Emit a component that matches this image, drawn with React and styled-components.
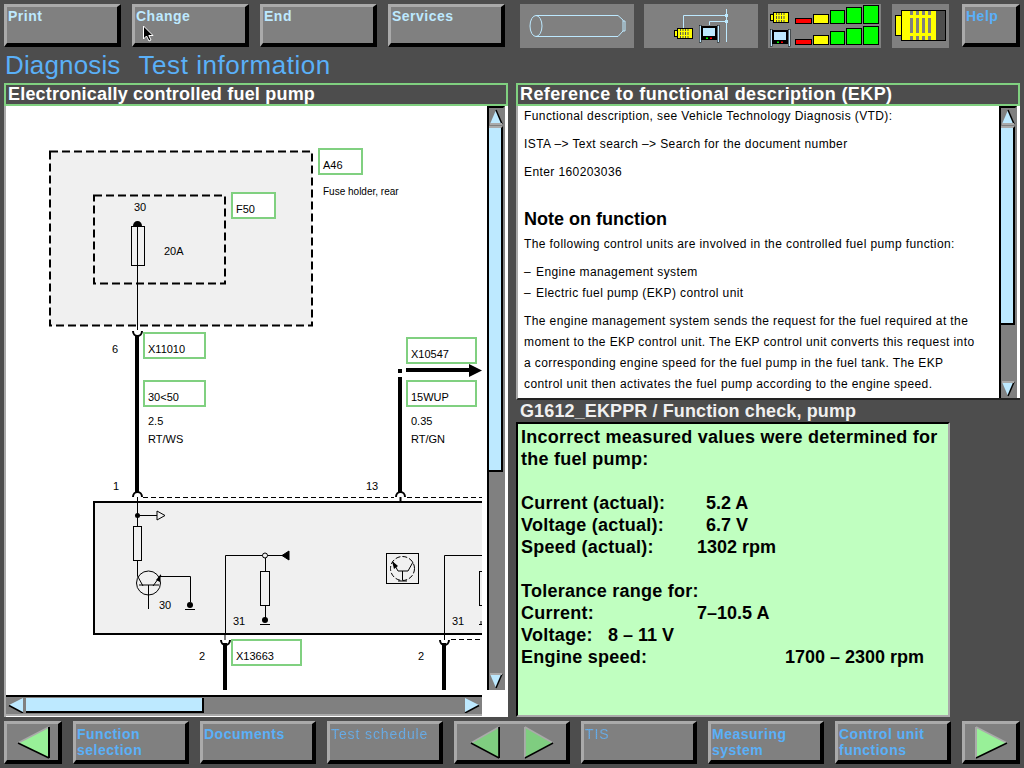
import React from "react";
import styled, { createGlobalStyle, css } from "styled-components";

const GlobalStyle = createGlobalStyle`
  html, body {
    margin: 0;
    padding: 0;
    background: #4d4d4d;
    font-family: "Liberation Sans", Arial, sans-serif;
  }
`;

const Page = styled.div`
  width: 1024px;
  height: 768px;
  box-sizing: border-box;
  padding: 4px 4px 0;
  position: relative;
  overflow: hidden;
  display: flex;
  flex-direction: column;
`;

const Toolbar = styled.div`
  display: flex;
  height: 44px;
  gap: 11px;
`;

const disabledText = css`
  font-weight: 400;
  letter-spacing: 0.9px;
  background: repeating-conic-gradient(#5ab0f8 0 25%, #74a4d0 0 50%) 0 0 / 2px 2px;
  -webkit-background-clip: text;
  background-clip: text;
  color: transparent;
`;

const Button = styled.div`
  box-sizing: border-box;
  width: ${(p) => p.$w || 117}px;
  height: 43px;
  flex: none;
  margin-left: ${(p) => p.$ml || 0}px;
  background: #808080;
  border-style: solid;
  border-width: 3px 4px 4px 3px;
  border-color: #aaaaaa #000 #000 #aaaaaa;
  padding: ${(p) => (p.$low ? 2 : 1)}px 0 0 1px;
  font-size: 14px;
  font-weight: 700;
  line-height: 16px;
  letter-spacing: 0.5px;
  color: ${(p) => (p.$dark ? "#5ab0f8" : "#bde9ff")};
  display: ${(p) => (p.$center ? "flex" : "block")};
  align-items: center;
  justify-content: center;
  gap: 24px;
`;

const Caption = styled.span`
  display: block;
  ${(p) => p.$disabled && disabledText}
  width: fit-content;
`;

const IconTile = styled.div`
  box-sizing: border-box;
  flex: none;
  width: ${(p) => p.$w}px;
  height: 44px;
  margin-left: ${(p) => p.$ml || 0}px;
  background: #808080;
  svg {
    display: block;
  }
`;

const Title = styled.div`
  height: 35px;
  display: flex;
  align-items: center;
  gap: 18px;
  padding-left: 1px;
  font-size: 26px;
  color: #5ab0f8;
`;

const TitlePart = styled.span`
  letter-spacing: ${(p) => p.$ls}px;
`;

const Columns = styled.div`
  display: grid;
  grid-template-columns: 504px 504px;
  column-gap: 8px;
`;

const Column = styled.div`
  display: flex;
  flex-direction: column;
  height: 634px;
`;

const PanelHeader = styled.div`
  box-sizing: border-box;
  height: 23px;
  border: 2px solid #80d080;
  padding-left: 2px;
  font-size: 18px;
  font-weight: 700;
  line-height: 18px;
  letter-spacing: ${(p) => p.$ls}px;
  color: #fff;
  white-space: nowrap;
`;

const DiagramPane = styled.div`
  box-sizing: border-box;
  height: 611px;
  background: #fff;
  border-left: 2px solid #aaa;
  display: grid;
  grid-template-columns: 476px 18px;
  grid-template-rows: 584px 21px;
  column-gap: 5px;
  row-gap: 5px;
`;

const Diagram = styled.svg`
  display: block;
  width: 476px;
  height: 584px;
`;

const VScroll = styled.div`
  box-sizing: border-box;
  width: 18px;
  height: ${(p) => p.$h}px;
  background: #808080;
  border-left: 2px solid #000;
  border-top: 2px solid #000;
  border-right: 2px solid #808080;
  display: flex;
  flex-direction: column;
`;

const ThumbV = styled.div`
  box-sizing: border-box;
  width: 14px;
  height: ${(p) => p.$size}px;
  flex: none;
  background: #bde9ff;
  border-right: 2px solid #000;
  border-bottom: 2px solid #000;
  border-top: 2px solid #aaa;
`;

const Spacer = styled.div`
  flex: 1;
`;

const HScroll = styled.div`
  box-sizing: border-box;
  grid-column: 1;
  width: 476px;
  height: 21px;
  background: #808080;
  border-top: 2px solid #000;
  border-bottom: 2px solid #aaa;
  padding: 1px 2px;
  display: flex;
  align-items: stretch;
  gap: 2px;
`;

const ThumbH = styled.div`
  box-sizing: border-box;
  width: ${(p) => p.$size}px;
  flex: none;
  background: #bde9ff;
  border-right: 2px solid #000;
  border-bottom: 2px solid #000;
`;

const TextPane = styled.div`
  box-sizing: border-box;
  height: 294px;
  background: #fff;
  border-left: 2px solid #aaa;
  border-bottom: 2px solid #222;
  display: flex;
  justify-content: space-between;
  padding-right: 3px;
`;

const TextBody = styled.div`
  padding: 3px 0 0 6px;
  font-size: 12px;
  line-height: 14px;
  letter-spacing: 0.4px;
  color: #000;
  white-space: nowrap;
`;

const Para = styled.p`
  margin: ${(p) => p.$mt || 0}px 0 ${(p) => p.$mb ?? 14}px;
  line-height: ${(p) => p.$lh || 14}px;
`;

const Dash = styled.span`
  display: inline-block;
  width: 12px;
`;

const NoteHeading = styled.h3`
  margin: 30px 0 8px;
  font-size: 18px;
  line-height: 20px;
  font-weight: 700;
  letter-spacing: 0;
`;

const ResultHeading = styled.div`
  height: 22px;
  padding-left: 4px;
  font-size: 18px;
  font-weight: 700;
  line-height: 23px;
  color: #f0f0f0;
  letter-spacing: 0.12px;
  white-space: nowrap;
`;

const ResultBox = styled.div`
  box-sizing: border-box;
  width: 434px;
  height: 296px;
  background: #c0ffc0;
  border-style: solid;
  border-width: 2px;
  border-color: #000 #aaa #aaa #000;
  padding: 2px 0 0 3px;
  font-size: 18px;
  font-weight: 700;
  line-height: 22px;
  letter-spacing: 0.25px;
  color: #000;
`;

const ResultLine = styled.div`
  display: flex;
  height: 22px;
  margin-top: ${(p) => p.$gap || 0}px;
  white-space: nowrap;
`;

const ResultLabel = styled.span`
  flex: none;
  width: ${(p) => p.$w}px;
`;

const ResultValue = styled.span`
  letter-spacing: 0;
`;

const BottomBar = styled.div`
  display: flex;
  gap: 11px;
  margin-top: 4px;
`;

const CursorMark = styled.svg`
  position: absolute;
  left: 142px;
  top: 25px;
`;

const Wire = styled.path`
  fill: none;
  stroke: #000;
  stroke-width: ${(p) => p.$w || 1}px;
  ${(p) => p.$dash && `stroke-dasharray: ${p.$dash};`}
`;

const Area = styled.rect`
  fill: #f0f0f0;
  stroke: #000;
  stroke-width: 2px;
  ${(p) => p.$dash && `stroke-dasharray: ${p.$dash};`}
`;

const Part = styled.rect`
  fill: ${(p) => p.$fill || "none"};
  stroke: #000;
  stroke-width: 1px;
`;

const LabelBox = styled.rect`
  fill: #fff;
  stroke: #80d080;
  stroke-width: 2px;
`;

const DiagramText = styled.text`
  font-family: "Liberation Sans", Arial, sans-serif;
  font-size: ${(p) => p.$size || 11}px;
  fill: #000;
`;

const Tag = ({ x, y, w, label }) => (
  <>
    <LabelBox x={x} y={y} width={w} height={25} />
    <DiagramText x={x + 4} y={y + 20}>
      {label}
    </DiagramText>
  </>
);

const Ground = ({ x, y }) => (
  <>
    <circle cx={x} cy={y - 4} r={3} fill="#000" />
    <Wire d={`M${x - 5} ${y}.5H${x + 5}`} />
  </>
);

const ArrowUp = ({ flip }) => (
  <svg width="14" height="18" viewBox="0 0 14 18" style={{ flex: "none", transform: flip ? "rotate(180deg)" : "none" }}>
    <path d="M7 2 L13 16 H1 Z" fill="#bde9ff" />
    <path d={flip ? "M7 2 L1 16" : "M7 2 L13 16"} stroke="#000" strokeWidth="1.5" fill="none" />
    <path d="M1 16 H13" stroke="#aaa" strokeWidth="2" />
  </svg>
);

const ArrowSide = ({ right }) => (
  <svg width="16" height="15" viewBox="0 0 16 15" style={{ flex: "none" }}>
    {right ? (
      <>
        <path d="M1 0 L15 7 L1 15 Z" fill="#bde9ff" />
        <path d="M15 7.5 L1 15" stroke="#000" strokeWidth="1.5" />
      </>
    ) : (
      <>
        <path d="M15 0 L1 7 L15 15 Z" fill="#bde9ff" />
        <path d="M1 7.5 L15 15" stroke="#000" strokeWidth="1.5" />
      </>
    )}
  </svg>
);

const NavArrow = ({ right, dim }) => {
  const fill = dim ? "#7fcd80" : "#98f098";
  const w = dim ? 30 : 33;
  return (
    <svg width={w} height="33" viewBox="0 0 33 33" preserveAspectRatio="none" style={{ flex: "none" }}>
      {right ? (
        <>
          <path d="M1 1 L32 17 L1 32 Z" fill={fill} />
          <path d="M1 1 L32 17" stroke="#aaa" strokeWidth="1.5" fill="none" />
          <path d="M1 1 V32" stroke="#aaa" strokeWidth="2" fill="none" />
          <path d="M32 17 L1 32" stroke="#000" strokeWidth="1.5" fill="none" />
        </>
      ) : (
        <>
          <path d="M32 1 L1 17 L32 32 Z" fill={fill} />
          <path d="M32 1 L1 17" stroke="#aaa" strokeWidth="1.5" fill="none" />
          <path d="M1 17 L32 32" stroke="#000" strokeWidth="1.5" fill="none" />
          <path d="M32 1 V32" stroke="#000" strokeWidth="2" fill="none" />
        </>
      )}
    </svg>
  );
};

const MiniConnector = ({ x, y }) => (
  <g>
    <rect x={x + 0.5} y={y + 2.5} width="3" height="6" fill="#ff0" stroke="#000" />
    <rect x={x + 3.5} y={y + 0.5} width="15" height="10" fill="#ff0" stroke="#000" />
    {[0, 1, 2, 3].map((i) => (
      <rect key={i} x={x + 6 + i * 2.5} y={y + 1} width="1" height="9" fill="#555" />
    ))}
    <rect x={x + 5} y={y + 3} width="10" height="1" fill="#ff0" />
    <rect x={x + 5} y={y + 7} width="10" height="1" fill="#ff0" />
  </g>
);

const MiniMonitor = ({ x, y }) => (
  <g>
    <rect x={x + 0.25} y={y + 0.25} width="2" height="17" fill="#bde9ff" stroke="#000" strokeWidth="0.5" />
    <rect x={x + 18.25} y={y + 0.25} width="2" height="17" fill="#bde9ff" stroke="#000" strokeWidth="0.5" />
    <rect x={x + 2} y={y + 1} width="16" height="14" fill="#000" />
    <rect x={x + 4} y={y + 3} width="12" height="8" fill="#bde9ff" />
    <rect x={x + 7} y={y + 12.5} width="2" height="1.5" fill="#0f0" />
    <rect x={x + 11} y={y + 12.5} width="2" height="1.5" fill="#f00" />
  </g>
);

const CylinderIcon = () => (
  <svg width="114" height="44" viewBox="520 4 114 44" fill="none" stroke="#bde9ff" strokeWidth="1">
    <ellipse cx="536" cy="26" rx="6" ry="10.5" />
    <path d="M536 15.5H618L623 20V31L618 36.5H536" />
    <path d="M623 21H625V31H623" />
  </svg>
);

const WiringIcon = () => (
  <svg width="114" height="44" viewBox="644 4 114 44" fill="none">
    <path d="M726.5 9V42M726 15.5H683.5V28M726 21.5H709.5V25" stroke="#bde9ff" />
    <rect x="725" y="14" width="3" height="3" fill="#bde9ff" />
    <rect x="725" y="20" width="3" height="3" fill="#bde9ff" />
    <MiniConnector x={674} y={28} />
    <MiniMonitor x={699} y={25} />
  </svg>
);

const bars = [
  [795, 17, 5, "#f00"],
  [813, 16, 9, "#ff0"],
  [830, 15, 13, "#0f0"],
  [846, 16, 16, "#0f0"],
  [863, 16, 18, "#0f0"],
];

const SignalIcon = () => (
  <svg width="113" height="44" viewBox="768 4 113 44">
    <MiniConnector x={770} y={12} />
    <MiniMonitor x={770} y={29} />
    {[23.5, 44.5].map((bottom) =>
      bars.map(([x, w, h, fill]) => (
        <rect key={`${bottom}-${x}`} x={x + 0.5} y={bottom - h} width={w - 1} height={h} fill={fill} stroke="#000" />
      ))
    )}
  </svg>
);

const ConnectorIcon = () => (
  <svg width="57" height="44" viewBox="892 4 57 44">
    <rect x="895.5" y="15.5" width="6" height="20" fill="#ff0" stroke="#000" />
    <rect x="901.5" y="10.5" width="44" height="30" fill="#4d4d4d" stroke="#000" />
    <rect x="902" y="11" width="34" height="29" fill="#ff0" />
    {[910, 916, 922, 928].map((x) => (
      <React.Fragment key={x}>
        <rect x={x} y="11" width="3" height="4" fill="#808080" />
        <rect x={x} y="18" width="3" height="15" fill="#808080" />
        <rect x={x} y="36" width="3" height="4" fill="#808080" />
      </React.Fragment>
    ))}
  </svg>
);

const Schematic = () => (
  <Diagram viewBox="6 106 476 584">
    <Area x="50" y="151.5" width="262" height="174" $dash="8 4" />
    <Area x="94" y="195.5" width="131" height="88" $dash="8 4" />
    <Tag x={319} y={149} w={43} label="A46" />
    <DiagramText x={323} y={195} $size={10}>Fuse holder, rear</DiagramText>
    <Tag x={232} y={193} w={43} label="F50" />
    <DiagramText x={134} y={211}>30</DiagramText>
    <DiagramText x={164} y={255}>20A</DiagramText>
    <path d="M133 226a4.5 5 0 0 1 9 0z" fill="#000" />
    <Part x="131.5" y="226.5" width="13" height="39" $fill="#f0f0f0" />
    <Wire d="M137.5 226V330" />
    <Wire d="M133 331a4.5 5 0 0 0 9 0" $w={2} />

    <Wire d="M137 336V492" $w={4} />
    <Tag x={144} y={333} w={61} label="X11010" />
    <Tag x={144} y={381} w={61} label="30<50" />
    <DiagramText x={112} y={353}>6</DiagramText>
    <DiagramText x={148} y={425}>2.5</DiagramText>
    <DiagramText x={148} y={443}>RT/WS</DiagramText>

    <Tag x={407} y={338} w={69} label="X10547" />
    <Tag x={407} y={381} w={69} label="15WUP" />
    <Wire d="M406 370H470" $w={4} />
    <path d="M469 364L482 370.5L469 377Z" fill="#000" />
    <rect x="398" y="369" width="4" height="4" fill="#000" />
    <Wire d="M400 377V492" $w={4} />
    <DiagramText x={411} y={425}>0.35</DiagramText>
    <DiagramText x={411} y={443}>RT/GN</DiagramText>
    <DiagramText x={113} y={490}>1</DiagramText>
    <DiagramText x={366} y={490}>13</DiagramText>

    <Wire d="M133 497a4.5 5 0 0 1 9 0" $w={2} />
    <Wire d="M396 497a4.5 5 0 0 1 9 0" $w={2} />
    <Wire d="M143 497.5H394M407 497.5H482" $dash="5 3" />
    <Area x="94" y="502" width="400" height="132" />
    <Wire d="M137.5 497V526M137.5 560V576L143 586" />
    <Wire d="M400.5 497V502" $w={2} />
    <circle cx="137.5" cy="515.5" r="2.5" fill="#000" />
    <Wire d="M137 515.5H157M157 511L165 515.5L157 520Z" />
    <Part x="133.5" y="526.5" width="8" height="34" $fill="#f0f0f0" />
    <circle cx="148.5" cy="583" r="12" fill="none" stroke="#000" />
    <Wire d="M139 585H159M148.5 585V609M153 586L161 575M160 576.5H190.5V602" />
    <path d="M156 580L161 574L160 582Z" fill="#000" />
    <DiagramText x={159} y={609}>30</DiagramText>
    <Ground x={190} y={609} />

    <Wire d="M225.5 634V555.5H284" />
    <circle cx="265" cy="555.5" r="2.5" fill="#f0f0f0" stroke="#000" />
    <path d="M282 555.5L289 551V560Z" fill="#000" stroke="#000" />
    <Wire d="M265.5 558V571M265.5 605V620" />
    <Part x="260.5" y="571.5" width="9" height="34" $fill="#f0f0f0" />
    <Ground x={265} y={624} />
    <DiagramText x={233} y={625}>31</DiagramText>

    <Part x="386.5" y="553.5" width="32" height="30" $fill="#f0f0f0" />
    <circle cx="402.5" cy="568.5" r="12" fill="none" stroke="#000" strokeDasharray="5 2" />
    <Wire d="M393 562L398 571H408L413 562M402.5 571V580M398 581H407" />
    <path d="M392 561L398 566L394 569Z" fill="#000" />

    <Wire d="M444.5 634V555.5H482" />
    <Part x="479.5" y="571.5" width="9" height="34" />
    <DiagramText x={452} y={625}>31</DiagramText>
    <Wire d="M479 624.5H482M481 621V624" />

    <Wire d="M221 640a4.5 5 0 0 0 9 0" $w={2} />
    <Wire d="M225 634V640M444.5 634V640" />
    <Wire d="M440 640a4.5 5 0 0 0 9 0" $w={2} />
    <Wire d="M225 643V691M444 643V691" $w={4} />
    <Wire d="M451 639.5H482" $dash="5 3" />
    <Tag x={232} y={640} w={69} label="X13663" />
    <DiagramText x={199} y={660}>2</DiagramText>
    <DiagramText x={418} y={660}>2</DiagramText>
  </Diagram>
);

export default function App() {
  return (
    <Page>
      <GlobalStyle />
      <Toolbar>
        <Button>Print</Button>
        <Button>Change</Button>
        <Button>End</Button>
        <Button>Services</Button>
        <IconTile $w={114} $ml={4}>
          <CylinderIcon />
        </IconTile>
        <IconTile $w={114} $ml={-1}>
          <WiringIcon />
        </IconTile>
        <IconTile $w={113} $ml={-1}>
          <SignalIcon />
        </IconTile>
        <IconTile $w={57}>
          <ConnectorIcon />
        </IconTile>
        <Button $w={58} $dark $ml={2}>
          Help
        </Button>
      </Toolbar>

      <Title>
        <TitlePart $ls={0.15}>Diagnosis</TitlePart>
        <TitlePart $ls={0.55}>Test information</TitlePart>
      </Title>

      <Columns>
        <Column>
          <PanelHeader $ls={0.2}>Electronically controlled fuel pump</PanelHeader>
          <DiagramPane>
            <Schematic />
            <VScroll $h={584}>
              <ArrowUp />
              <ThumbV $size={346} />
              <Spacer />
              <ArrowUp flip />
            </VScroll>
            <HScroll>
              <ArrowSide />
              <ThumbH $size={178} />
              <Spacer />
              <ArrowSide right />
            </HScroll>
          </DiagramPane>
        </Column>

        <Column>
          <PanelHeader $ls={0.4}>Reference to functional description (EKP)</PanelHeader>
          <TextPane>
            <TextBody>
              <Para>Functional description, see Vehicle Technology Diagnosis (VTD):</Para>
              <Para>ISTA –&gt; Text search –&gt; Search for the document number</Para>
              <Para>Enter 160203036</Para>
              <NoteHeading>Note on function</NoteHeading>
              <Para>The following control units are involved in the controlled fuel pump function:</Para>
              <Para $mb={7}>
                <Dash>–</Dash>Engine management system
              </Para>
              <Para>
                <Dash>–</Dash>Electric fuel pump (EKP) control unit
              </Para>
              <Para $lh={21} $mb={0} $mt={-3}>
                The engine management system sends the request for the fuel required at the
                <br />
                moment to the EKP control unit. The EKP control unit converts this request into
                <br />
                a corresponding engine speed for the fuel pump in the fuel tank. The EKP
                <br />
                control unit then activates the fuel pump according to the engine speed.
              </Para>
            </TextBody>
            <VScroll $h={292}>
              <ArrowUp />
              <ThumbV $size={199} />
              <Spacer />
              <ArrowUp flip />
            </VScroll>
          </TextPane>
          <ResultHeading>G1612_EKPPR / Function check, pump</ResultHeading>
          <ResultBox>
            <ResultLine>Incorrect measured values were determined for</ResultLine>
            <ResultLine>the fuel pump:</ResultLine>
            <ResultLine $gap={22}>
              <ResultLabel $w={185}>Current (actual):</ResultLabel>
              <ResultValue>5.2 A</ResultValue>
            </ResultLine>
            <ResultLine>
              <ResultLabel $w={185}>Voltage (actual):</ResultLabel>
              <ResultValue>6.7 V</ResultValue>
            </ResultLine>
            <ResultLine>
              <ResultLabel $w={176}>Speed (actual):</ResultLabel>
              <ResultValue>1302 rpm</ResultValue>
            </ResultLine>
            <ResultLine $gap={22}>Tolerance range for:</ResultLine>
            <ResultLine>
              <ResultLabel $w={176}>Current:</ResultLabel>
              <ResultValue>7–10.5 A</ResultValue>
            </ResultLine>
            <ResultLine>
              <ResultLabel $w={87}>Voltage:</ResultLabel>
              <ResultValue>8 – 11 V</ResultValue>
            </ResultLine>
            <ResultLine>
              <ResultLabel $w={264}>Engine speed:</ResultLabel>
              <ResultValue>1700 – 2300 rpm</ResultValue>
            </ResultLine>
          </ResultBox>
        </Column>
      </Columns>

      <BottomBar>
        <Button $w={58} $center>
          <NavArrow />
        </Button>
        <Button $w={116} $dark $low>
          Function
          <br />
          selection
        </Button>
        <Button $w={116} $dark $low>Documents</Button>
        <Button $w={116} $dark $low>
          <Caption $disabled>Test schedule</Caption>
        </Button>
        <Button $w={116} $center>
          <NavArrow dim />
          <NavArrow right dim />
        </Button>
        <Button $w={116} $dark $low>
          <Caption $disabled>TIS</Caption>
        </Button>
        <Button $w={116} $dark $low>
          Measuring
          <br />
          system
        </Button>
        <Button $w={116} $dark $low>
          Control unit
          <br />
          functions
        </Button>
        <Button $w={58} $center>
          <NavArrow right />
        </Button>
      </BottomBar>

      <CursorMark width="12" height="17" viewBox="0 0 12 17">
        <path d="M1.5 1V14L4.5 11L7 16L9 15L6.8 10.5H11Z" fill="#000" stroke="#fff" strokeWidth="1" />
      </CursorMark>
    </Page>
  );
}
